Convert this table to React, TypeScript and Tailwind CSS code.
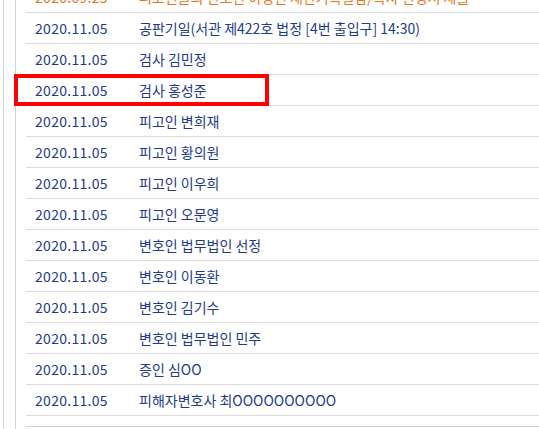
const rows: [string, string][] = [
  ["2020.11.05", "공판기일(서관 제422호 법정 [4번 출입구] 14:30)"],
  ["2020.11.05", "검사 김민정"],
  ["2020.11.05", "검사 홍성준"],
  ["2020.11.05", "피고인 변희재"],
  ["2020.11.05", "피고인 황의원"],
  ["2020.11.05", "피고인 이우희"],
  ["2020.11.05", "피고인 오문영"],
  ["2020.11.05", "변호인 법무법인 선정"],
  ["2020.11.05", "변호인 이동환"],
  ["2020.11.05", "변호인 김기수"],
  ["2020.11.05", "변호인 법무법인 민주"],
  ["2020.11.05", "증인 심OO"],
  ["2020.11.05", "피해자변호사 최OOOOOOOOOO"],
];

export default function App() {
  return (
    <div
      className="flex h-screen overflow-hidden bg-white pl-[3px] text-[14px]"
      style={{ fontFamily: '"Noto Sans CJK KR", "Liberation Sans", sans-serif' }}
    >
      <div className="flex flex-1 border-l border-[#d2d2d2] pl-[11px]">
        <div className="flex-1 border-l border-[#d2d2d2] pl-[10px]">
          <div className="-mt-[18px]">
            {/* row scrolled partly out of view */}
            <div className="flex h-[31px] items-center border-b border-[#dcdcdc] text-[#e8761c]">
              <span className="w-[113px] shrink-0 pl-[9px] tracking-[0.3px]">2020.09.25</span>
              <span>피고인들의 변호인 이영진 재판기록열람/복사 신청서 제출</span>
            </div>
            {rows.map(([date, text], i) => (
              <div
                key={i}
                className="relative flex h-[31px] items-center border-b border-[#dcdcdc] text-[#1d3a8e]"
              >
                <span className="w-[113px] shrink-0 pl-[9px] tracking-[0.3px]">{date}</span>
                <span>{text}</span>
                {i === 2 && (
                  <div className="absolute -left-[12px] -top-[1px] h-[32px] w-[255px] border-[4px] border-[#ff0000]" />
                )}
              </div>
            ))}
          </div>
          <div className="mt-[10px] h-10 border-t border-[#c9d1e0]" />
        </div>
      </div>
    </div>
  );
}
